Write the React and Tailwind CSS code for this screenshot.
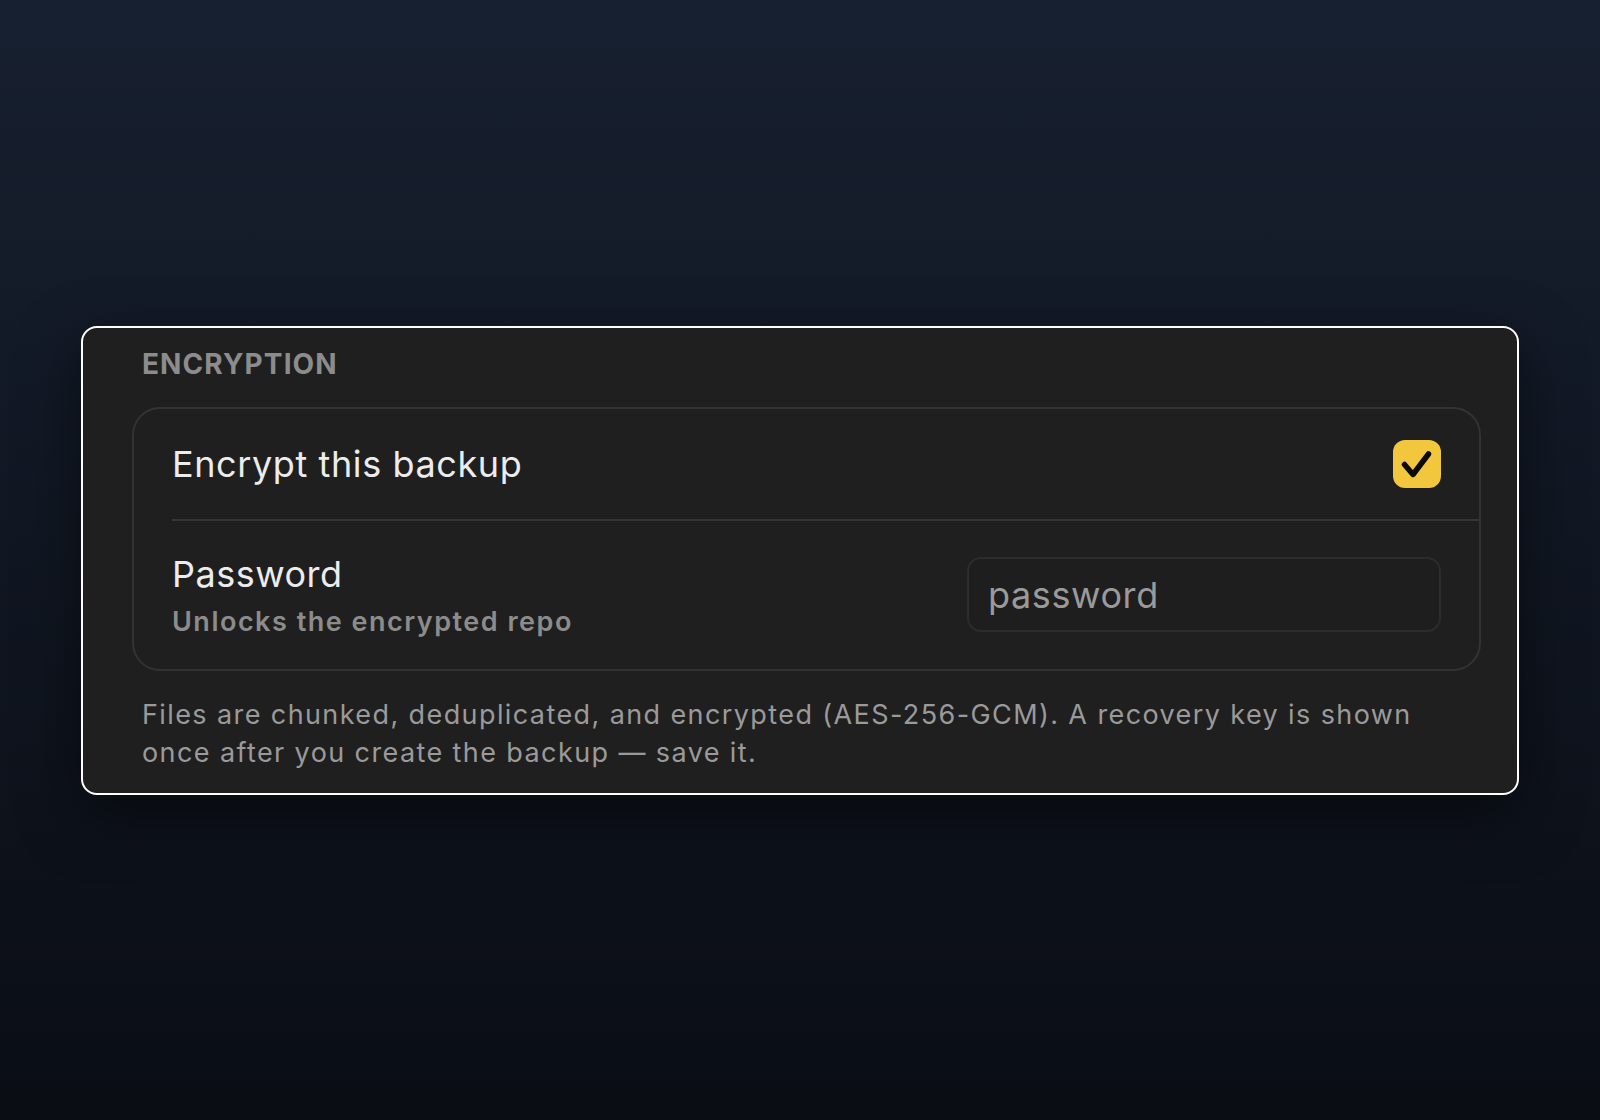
export default function App() {
  const font = { fontFamily: 'Inter, "Noto Sans", sans-serif' };
  return (
    <div
      className="w-full h-[1120px] flex items-center justify-center bg-gradient-to-b from-[#172030] to-[#0a0d14]"
      style={font}
    >
      <div className="w-[1438px] rounded-[16px] border-2 border-white bg-[#1f1f1f] pl-[49px] pr-[36px] pt-[19px] pb-[21px] shadow-[0_20px_60px_rgba(0,0,0,0.5)]">
        <div className="pl-[10px] text-[28px] leading-[34px] font-bold tracking-[1.1px] text-[#8c8c8c]">
          ENCRYPTION
        </div>
        <div className="mt-[26px] rounded-[28px] border-2 border-[#333333]">
          <div className="flex items-center justify-between pl-[38px] pr-[38px] py-[31px]">
            <span className="text-[36px] leading-[44px] text-[#ececec] tracking-[0.6px]">
              Encrypt this backup
            </span>
            <div className="w-[48px] h-[48px] rounded-[12px] bg-[#f2c63d] flex items-center justify-center">
              <svg width="48" height="48" viewBox="0 0 48 48" fill="none">
                <path
                  d="M11.5 24.5 L20 34.5 L35.5 14"
                  stroke="#0a0a0a"
                  strokeWidth="5.5"
                  strokeLinecap="round"
                  strokeLinejoin="round"
                />
              </svg>
            </div>
          </div>
          <div className="ml-[38px] h-[2px] bg-[#363636]" />
          <div className="flex items-center justify-between pl-[38px] pr-[38px] py-[31px]">
            <div className="flex flex-col">
              <span className="text-[36px] leading-[44px] text-[#ececec] tracking-[0.5px]">
                Password
              </span>
              <span className="mt-[10px] text-[27px] leading-[32px] font-semibold tracking-[1.5px] text-[#8c8c8c]">
                Unlocks the encrypted repo
              </span>
            </div>
            <div className="w-[474px] h-[75px] rounded-[14px] border-2 border-[#2c2c2c] bg-[#1e1e1e] flex items-center pl-[19px]">
              <span className="text-[36px] leading-[44px] text-[#9a9a9a] tracking-[0.6px]">
                password
              </span>
            </div>
          </div>
        </div>
        <p className="mt-[25px] pl-[10px] text-[27px] leading-[38px] tracking-[1.4px] text-[#9a9a9a]">
          Files are chunked, deduplicated, and encrypted (AES-256-GCM). A recovery key is shown
          <br />
          once after you create the backup — save it.
        </p>
      </div>
    </div>
  );
}
